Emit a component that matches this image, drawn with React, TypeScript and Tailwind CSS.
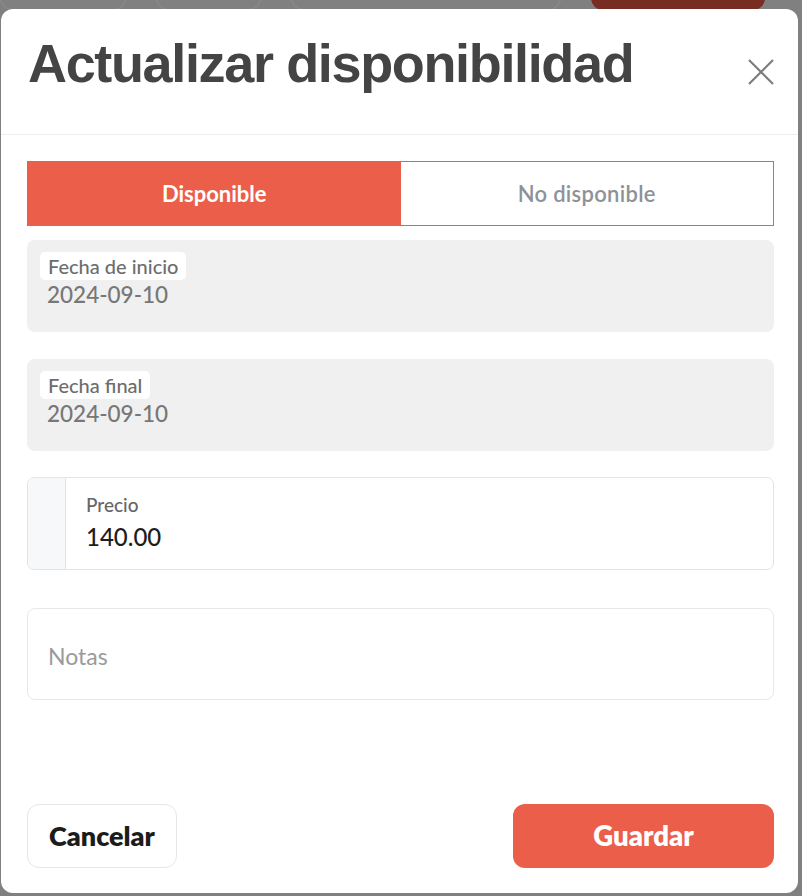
import { useState } from "react"

const body = { fontFamily: "Lato, 'Noto Sans', sans-serif" }

function DateField({ label, value }: { label: string; value: string }) {
  return (
    <div className="h-[92px] rounded-lg bg-[#f0f0f0] pl-[13px] pt-[12px]">
      <span className="inline-block h-[28px] rounded-[5px] bg-white px-[8px] text-[20px] leading-[28px] font-medium text-[#6d6d6d]">
        {label}
      </span>
      <div className="pl-[7px] text-[22.5px] leading-[30px] font-medium text-[#777777]">{value}</div>
    </div>
  )
}

const tabOn = "flex-1 bg-[#eb5e4a] text-[22px] font-bold text-white"
const tabOff = "flex-1 bg-white text-[22px] font-semibold tracking-[0.3px] text-[#8d9297]"

export default function App() {
  const [tab, setTab] = useState<"on" | "off">("on")

  return (
    <div className="relative h-[896px] w-full overflow-hidden bg-[#808080]" style={body}>
      {/* page behind the overlay */}
      <div className="-mt-[30px] flex gap-[30px]">
        <div className="h-[40px] w-[126px] rounded-[12px] border border-[#8e8e8e]" />
        <div className="h-[40px] w-[105px] rounded-[12px] border border-[#8e8e8e]" />
        <div className="h-[40px] w-[270px] rounded-[12px] border border-[#8e8e8e]" />
        <div className="h-[40px] w-[174px] rounded-[12px] bg-[#782d23]" />
      </div>

      {/* modal */}
      <div className="absolute left-[1px] top-[9px] flex h-[884px] w-[797px] flex-col rounded-[12px] bg-white">
        <div className="flex h-[126px] shrink-0 items-start justify-between border-b border-[#eeeeee] pl-[27px] pr-[23px] pt-[22px]">
          <h1
            className="text-[54px] leading-[64px] font-bold tracking-[-1.35px] text-[#444444]"
            style={{ fontFamily: "'Liberation Sans', Arial, sans-serif" }}
          >
            Actualizar disponibilidad
          </h1>
          <button aria-label="Cerrar" className="mt-[27px] text-[#7c7c7c]">
            <svg width="28" height="28" viewBox="0 0 28 28" fill="none" stroke="currentColor" strokeWidth="2.2">
              <line x1="2" y1="2" x2="26" y2="26" />
              <line x1="26" y1="2" x2="2" y2="26" />
            </svg>
          </button>
        </div>

        <div className="flex flex-1 flex-col pl-[26px] pr-[24px] pt-[26px] pb-[25px]">
          {/* coral frame round the two tabs */}
          <div className="flex h-[65px] bg-[#eb5e4a] p-px">
            <button onClick={() => setTab("on")} className={tab === "on" ? tabOn : tabOff}>
              Disponible
            </button>
            <button onClick={() => setTab("off")} className={tab === "off" ? tabOn : tabOff}>
              No disponible
            </button>
          </div>

          <div className="mt-[14px]">
            <DateField label="Fecha de inicio" value="2024-09-10" />
          </div>
          <div className="mt-[27px]">
            <DateField label="Fecha final" value="2024-09-10" />
          </div>

          <div className="mt-[26px] flex h-[93px] rounded-[7px] border border-[#e4e4e4]">
            <div className="w-[38px] shrink-0 rounded-l-[7px] border-r border-[#e4e4e4] bg-[#f7f8f9]" />
            <div className="flex flex-col pl-[20px] pt-[15px]">
              <span className="text-[19px] leading-[24px] font-medium text-[#666666]">Precio</span>
              <span className="mt-[5px] text-[24px] leading-[30px] font-medium text-[#1d1d1d]">140.00</span>
            </div>
          </div>

          <div className="mt-[38px] h-[92px] rounded-lg border border-[#e8e8e8] pl-[20px] pt-[32px]">
            <span className="text-[23px] leading-[30px] text-[#9a9a9a]">Notas</span>
          </div>

          <div className="mt-auto flex items-end justify-between">
            <button className="h-[64px] w-[150px] rounded-[12px] border border-[#e6e6e6] text-[27px] font-extrabold text-[#1c1c1c]">
              Cancelar
            </button>
            <button className="h-[64px] w-[261px] rounded-[12px] bg-[#eb5e4a] text-[27.5px] font-extrabold text-white">
              Guardar
            </button>
          </div>
        </div>
      </div>
    </div>
  )
}
